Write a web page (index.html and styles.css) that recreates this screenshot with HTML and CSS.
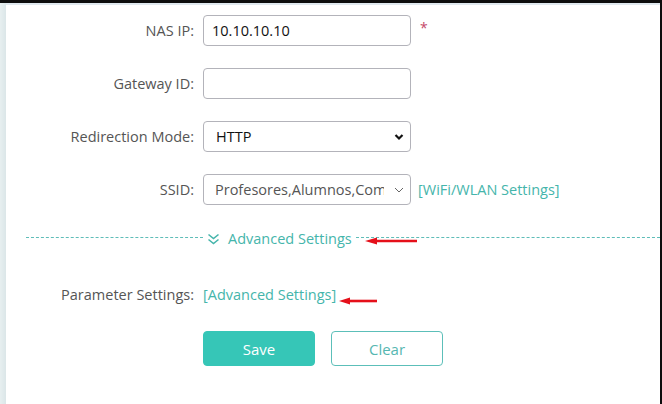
FILE: index.html
```html
<!DOCTYPE html>
<html lang="en">
<head>
<meta charset="utf-8">
<title>Portal Settings</title>
<link rel="stylesheet" href="styles.css">
</head>
<body>
<div class="frame">
  <div class="side"></div>
  <main class="content">
    <form class="form">
      <label class="label" for="nas">NAS IP:</label>
      <div class="field">
        <input id="nas" class="input" type="text" value="10.10.10.10">
        <span class="req">*</span>
      </div>

      <label class="label" for="gw">Gateway ID:</label>
      <div class="field">
        <input id="gw" class="input" type="text" value="">
      </div>

      <label class="label" for="mode">Redirection Mode:</label>
      <div class="field">
        <div class="select-wrap">
          <select id="mode" class="input select dark"><option>HTTP</option></select>
          <svg class="caret bold" width="10" height="8" viewBox="0 0 10 8"><path d="M1.5 2 L5 5.5 L8.5 2" fill="none" stroke="#111" stroke-width="2.2"/></svg>
        </div>
      </div>

      <label class="label" for="ssid">SSID:</label>
      <div class="field">
        <div class="select-wrap">
          <select id="ssid" class="input select"><option>Profesores,Alumnos,Comunidad</option></select>
          <svg class="caret" width="10" height="8" viewBox="0 0 10 8"><path d="M1 2 L5 6 L9 2" fill="none" stroke="#666" stroke-width="1"/></svg>
        </div>
        <a class="link wifi" href="#">[WiFi/WLAN Settings]</a>
      </div>
    </form>

    <div class="divider">
      <span class="toggle">
        <svg width="13" height="12" viewBox="0 0 13 12"><path d="M1.5 1.5 L6.5 5.5 L11.5 1.5 M1.5 6.5 L6.5 10.5 L11.5 6.5" fill="none" stroke="#45b5ab" stroke-width="1.6"/></svg>
        <span>Advanced Settings</span>
      </span>
    </div>

    <div class="form param">
      <span class="label">Parameter Settings:</span>
      <div class="field"><a class="link" href="#">[Advanced Settings]</a></div>
    </div>

    <div class="actions">
      <button class="btn primary" type="button">Save</button>
      <button class="btn ghost" type="button">Clear</button>
    </div>
  </main>
</div>

<svg class="arrow a1" width="54" height="10" viewBox="0 0 54 10"><path d="M12 5 H52" stroke="#e5101a" stroke-width="2.6"/><path d="M0 5 L12 1.5 L12 8.5 Z" fill="#e5101a"/></svg>
<svg class="arrow a2" width="40" height="10" viewBox="0 0 40 10"><path d="M10 5 H38" stroke="#e5101a" stroke-width="2.6"/><path d="M0 5 L11 1.5 L11 8.5 Z" fill="#e5101a"/></svg>
</body>
</html>
```
FILE: styles.css
```css
* { box-sizing: border-box; }
html, body { margin: 0; padding: 0; }
body {
  width: 662px;
  height: 404px;
  overflow: hidden;
  background: #fff;
  font-family: "Open Sans", "Liberation Sans", Arial, sans-serif;
  font-size: 14.5px;
  color: #555;
  position: relative;
}
.frame {
  display: flex;
  height: 404px;
  border-top: 3px solid #0d0d0d;
  border-right: 2px solid #0d0d0d;
}
.side {
  width: 6px;
  flex: none;
  background: linear-gradient(to right, #e7eff0, #dbe6e8);
}
.content {
  flex: 1;
  border-top: 2px solid #dfe8ee;
  padding-top: 10px;
}
.form {
  display: grid;
  grid-template-columns: 188px 1fr;
  column-gap: 9px;
  row-gap: 22px;
  align-items: center;
}
.label {
  text-align: right;
  color: #555;
  line-height: 31px;
}
.field {
  display: flex;
  align-items: center;
  height: 31px;
}
.input {
  width: 208px;
  height: 31px;
  border: 1px solid #b3b3ba;
  border-radius: 4px;
  padding: 0 8px;
  font-family: inherit;
  font-size: 14.5px;
  color: #111;
  background: #fff;
  outline: none;
}
.req {
  color: #c4486a;
  margin-left: 9px;
  margin-top: -6px;
  font-size: 14px;
}
.select-wrap { position: relative; }
.select {
  appearance: none;
  -webkit-appearance: none;
  padding: 0 26px 0 11px;
  color: #555;
}
.select.dark { color: #111; padding-left: 12px; }
.caret {
  position: absolute;
  right: 7px;
  top: 12px;
  pointer-events: none;
}
.link {
  color: #45b5ab;
  text-decoration: none;
}
.wifi { margin-left: 7px; }
.divider {
  display: flex;
  align-items: center;
  margin: 24px 0 0 20px;
  height: 16px;
}
.divider::before {
  content: "";
  width: 177px;
  border-top: 1px dashed #5fbdb8;
}
.divider::after {
  content: "";
  flex: 1;
  border-top: 1px dashed #5fbdb8;
}
.toggle {
  display: flex;
  align-items: center;
  gap: 8px;
  padding: 0 4px;
  color: #45b5ab;
  margin-top: 3px;
}
.param { margin-top: 34px; }
.actions {
  display: flex;
  gap: 16px;
  margin: 21px 0 0 197px;
}
.btn {
  width: 112px;
  height: 35px;
  border-radius: 4px;
  font-family: inherit;
  font-size: 15px;
  cursor: pointer;
}
.primary {
  background: #36c6b7;
  border: 1px solid #36c6b7;
  color: #fff;
}
.ghost {
  background: #fff;
  border: 1px solid #5cbfb9;
  color: #56b7b1;
}
.arrow { position: absolute; }
.a1 { left: 365px; top: 236px; }
.a2 { left: 339px; top: 296px; }
```
